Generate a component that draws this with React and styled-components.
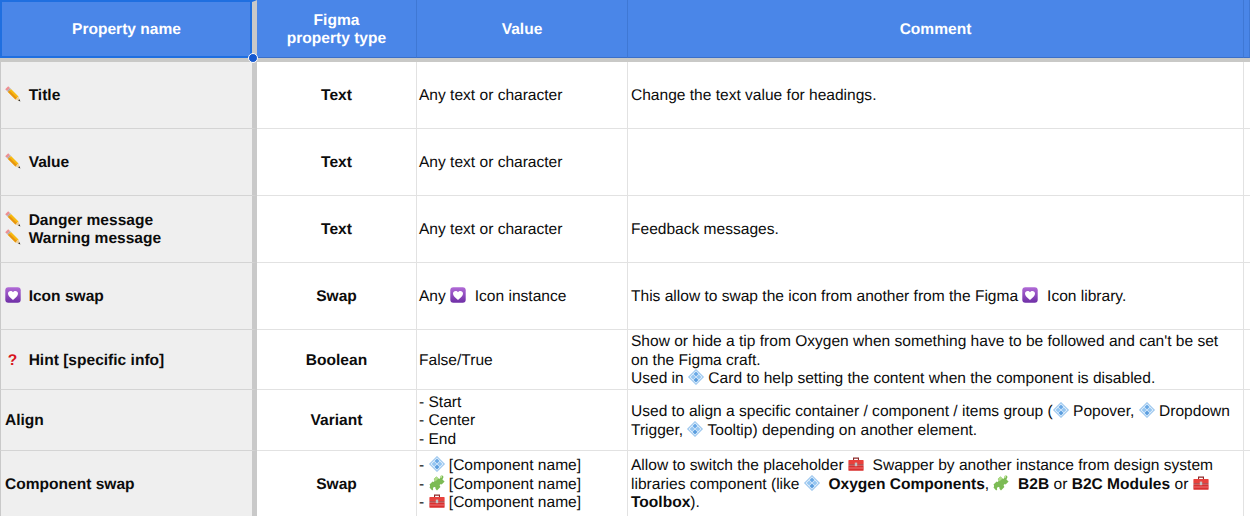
import React from "react";
import styled, { createGlobalStyle } from "styled-components";

const Global = createGlobalStyle`
  html, body { margin: 0; padding: 0; background: #fff; overflow: hidden; }
`;

const Sheet = styled.div`
  width: 1250px;
  height: 516px;
  overflow: hidden;
  font-family: "Liberation Sans", Arial, sans-serif;
  font-size: 15.55px;
  line-height: 18.4px;
  color: #0c0c0c;
  white-space: pre-wrap;
  text-rendering: geometricPrecision;
`;

const Columns = styled.div`
  display: grid;
  grid-template-columns: 257px 160px 211px 616px 1fr;
  grid-template-rows: ${(p) => p.$h}px;
  height: ${(p) => p.$h}px;
  && > * {
    padding-top: ${(p) => p.$nudge}px;
  }
`;

const HeaderRow = styled(Columns)`
  position: relative;
  border-bottom: 4px solid #c9c9c7;
  box-sizing: content-box;
`;

const HeaderCell = styled.div`
  display: flex;
  align-items: center;
  justify-content: center;
  text-align: center;
  background: #4a86e8;
  color: #fff;
  font-weight: 700;
  border-right: 1px solid #3f78d4;
  border-bottom: 1px solid #3a6fc9;
`;

const SelectedHeader = styled(HeaderCell)`
  border: 2px solid #1f6fe0;
  border-right: 5px solid #c9c9c9;
  box-shadow: inset -2px 0 0 #1f6fe0;
  padding-right: 1px;
`;

const Handle = styled.span`
  position: absolute;
  left: 248px;
  top: 53px;
  width: 8px;
  height: 8px;
  border-radius: 50%;
  background: #1558d0;
  border: 1px solid #fff;
  && {
    padding: 0;
  }
`;

const Glyph = styled.svg`
  display: inline-block;
  width: 16px;
  height: 16px;
  margin-block: -3px;
  vertical-align: 1px;
`;

const Cell = styled.div`
  display: flex;
  align-items: center;
  padding: 0 3px;
  border-right: 1px solid #e2e2e2;
  border-bottom: 1px solid #e2e2e2;
  min-width: 0;
  box-sizing: border-box;
`;

const NameCell = styled(Cell)`
  background: #efefef;
  font-weight: 700;
  padding: 0 0 0 4px;
  border-left: 1px solid #c9c9c9;
  border-right: 5px solid #c9c9c9;
  border-bottom-color: #d4d4d4;
  ${Glyph} {
    margin-right: -1px;
  }
`;

const TypeCell = styled(Cell)`
  justify-content: center;
  font-weight: 700;
`;

const ValueCell = styled(Cell)`
  padding-left: 2px;
`;

const CommentCell = styled(Cell)``;

const Block = styled.div``;

const Strong = styled.b`
  font-weight: 700;
`;

const Hint = styled.span`
  display: inline-block;
  width: 15px;
  text-align: center;
  color: #d8141c;
  font-weight: 700;
`;

const Pencil = () => (
  <Glyph viewBox="0 0 16 16">
    <path d="M0.2 3.2 L3.2 0.2 L5 2 L2 5 Z" fill="#ee8f92" />
    <path d="M2 5 L5 2 L6 3 L3 6 Z" fill="#a9a9a9" />
    <path d="M3 6 L6 3 L13.5 10.5 L10.5 13.5 Z" fill="#f7b90f" />
    <path d="M3 6 L4.4 4.6 L12 12 L10.5 13.5 Z" fill="#e8930f" />
    <path d="M10.5 13.5 L13.5 10.5 L15.2 15.2 Z" fill="#eccf9f" />
    <path d="M13.2 14.4 L14.4 13.2 L15.4 15.4 Z" fill="#222" />
  </Glyph>
);

const Heart = () => (
  <Glyph viewBox="0 0 16 16">
    <defs>
      <linearGradient id="hg" x1="0" y1="0" x2="0" y2="1">
        <stop offset="0" stopColor="#b06ad6" />
        <stop offset="1" stopColor="#6f2fa6" />
      </linearGradient>
    </defs>
    <rect x="0.3" y="0.3" width="15.4" height="15.4" rx="3" fill="url(#hg)" />
    <path
      d="M8 12.9 C4.6 10.4 3 8.7 3 6.6 C3 5 4.2 3.9 5.6 3.9 C6.6 3.9 7.5 4.4 8 5.3 C8.5 4.4 9.4 3.9 10.4 3.9 C11.8 3.9 13 5 13 6.6 C13 8.7 11.4 10.4 8 12.9 Z"
      fill="#fff"
    />
  </Glyph>
);

const Diamond = () => (
  <Glyph viewBox="0 0 16 16">
    <path d="M8 0 L16 8 L8 16 L0 8 Z" fill="#8fbfec" />
    <path d="M8 1.3 L14.7 8 L8 14.7 L1.3 8 Z" fill="#e4f1fc" />
    <path d="M8 2.6 L10.5 5.1 L8 7.6 L5.5 5.1 Z" fill="#6aa9e6" />
    <path d="M8 8.4 L10.5 10.9 L8 13.4 L5.5 10.9 Z" fill="#5c9ede" />
    <path d="M5.1 5.5 L7.6 8 L5.1 10.5 L2.6 8 Z" fill="#95c6f1" />
    <path d="M10.9 5.5 L13.4 8 L10.9 10.5 L8.4 8 Z" fill="#95c6f1" />
  </Glyph>
);

const Puzzle = () => (
  <Glyph viewBox="0 0 16 16">
    <path
      d="M0.5 9.6 L3.6 6.6 C4.4 7.2 5.6 6.8 5.5 5.6 C5.4 4.6 4.6 4.3 4.8 3.9 L7.4 1.6 L9.6 3.4 C10.4 4 11.4 3.4 11.2 2.4 C11 1.2 12 0.2 13.2 0.6 C14.6 1 14.8 2.6 13.9 3.4 C13.4 4 13.4 4.6 13.9 5 L15.6 6.6 L12.6 9.4 C11.8 8.8 10.6 9.3 10.7 10.4 C10.8 11.3 11.6 11.6 11.4 12 L8 15.4 L6.4 13.8 C7 12.8 6.2 11.6 5 12 C4 12.4 3.8 13.6 4.2 14.4 L3.2 15.4 L0.5 12.4 C1.3 11.8 1.3 10.4 0.5 9.6 Z"
      fill="#7cbb55"
    />
    <path d="M4.8 3.9 L7.4 1.6 L9.6 3.4 L6.6 6.2 Z" fill="#aedb86" />
    <path d="M11.2 2.4 C11 1.2 12 0.2 13.2 0.6 L12.6 3 Z" fill="#c8e9a4" />
  </Glyph>
);

const Toolbox = () => (
  <Glyph viewBox="0 0 16 16">
    <path d="M5 4.5 V1.6 H11 V4.5 H9.9 V2.8 H6.1 V4.5 Z" fill="#8d2a2a" />
    <rect x="0.4" y="4.1" width="15.2" height="4.3" rx="0.6" fill="#e8413c" />
    <rect x="0.4" y="8.4" width="15.2" height="1.1" fill="#8f1f22" />
    <rect x="0.4" y="9.5" width="15.2" height="5.2" rx="0.4" fill="#d9302f" />
    <rect x="0.4" y="11.6" width="15.2" height="0.8" fill="#f2888a" />
    <rect x="6.8" y="6.6" width="2.4" height="3.6" fill="#c4c4c4" />
  </Glyph>
);

const rows = [
  {
    h: 67,
    nudge: 2,
    name: <><Pencil />{"  "}Title</>,
    type: "Text",
    value: "Any text or character",
    comment: "Change the text value for headings.",
  },
  {
    h: 67,
    nudge: 2,
    name: <><Pencil />{"  "}Value</>,
    type: "Text",
    value: "Any text or character",
    comment: "",
  },
  {
    h: 67,
    nudge: 2,
    name: <><Pencil />{"  "}Danger message<br /><Pencil />{"  "}Warning message</>,
    type: "Text",
    value: "Any text or character",
    comment: "Feedback messages.",
  },
  {
    h: 67,
    nudge: 2,
    name: <><Heart />{"  "}Icon swap</>,
    type: "Swap",
    value: <>Any <Heart />{"  "}Icon instance</>,
    comment: <>This allow to swap the icon from another from the Figma <Heart />{"  "}Icon library.</>,
  },
  {
    h: 60,
    nudge: 3,
    name: <><Hint>?</Hint>{"  "}Hint [specific info]</>,
    type: "Boolean",
    value: "False/True",
    comment: (
      <>
        Show or hide a tip from Oxygen when something have to be followed and can't be set
        <br />on the Figma craft.
        <br />Used in <Diamond /> Card to help setting the content when the component is disabled.
      </>
    ),
  },
  {
    h: 61,
    nudge: 3,
    name: "Align",
    type: "Variant",
    value: <>- Start<br />- Center<br />- End</>,
    comment: (
      <>
        Used to align a specific container / component / items group (<Diamond /> Popover, <Diamond /> Dropdown
        <br />Trigger, <Diamond /> Tooltip) depending on another element.
      </>
    ),
  },
  {
    h: 66,
    nudge: 3,
    name: "Component swap",
    type: "Swap",
    value: (
      <>
        - <Diamond /> [Component name]
        <br />- <Puzzle /> [Component name]
        <br />- <Toolbox /> [Component name]
      </>
    ),
    comment: (
      <>
        Allow to switch the placeholder <Toolbox />{"  "}Swapper by another instance from design system
        <br />libraries component (like <Diamond />{"  "}<Strong>Oxygen Components</Strong>, <Puzzle />{"  "}
        <Strong>B2B</Strong> or <Strong>B2C Modules</Strong> or <Toolbox />
        <br /><Strong>Toolbox</Strong>).
      </>
    ),
  },
];

export default function App() {
  return (
    <Sheet>
      <Global />
      <HeaderRow $h={58} $nudge={3}>
        <SelectedHeader>Property name</SelectedHeader>
        <HeaderCell>Figma<br />property type</HeaderCell>
        <HeaderCell>Value</HeaderCell>
        <HeaderCell>Comment</HeaderCell>
        <HeaderCell />
        <Handle />
      </HeaderRow>
      {rows.map((r, i) => (
        <Columns key={i} $h={r.h} $nudge={r.nudge}>
          <NameCell><Block>{r.name}</Block></NameCell>
          <TypeCell>{r.type}</TypeCell>
          <ValueCell><Block>{r.value}</Block></ValueCell>
          <CommentCell><Block>{r.comment}</Block></CommentCell>
          <Cell />
        </Columns>
      ))}
    </Sheet>
  );
}
